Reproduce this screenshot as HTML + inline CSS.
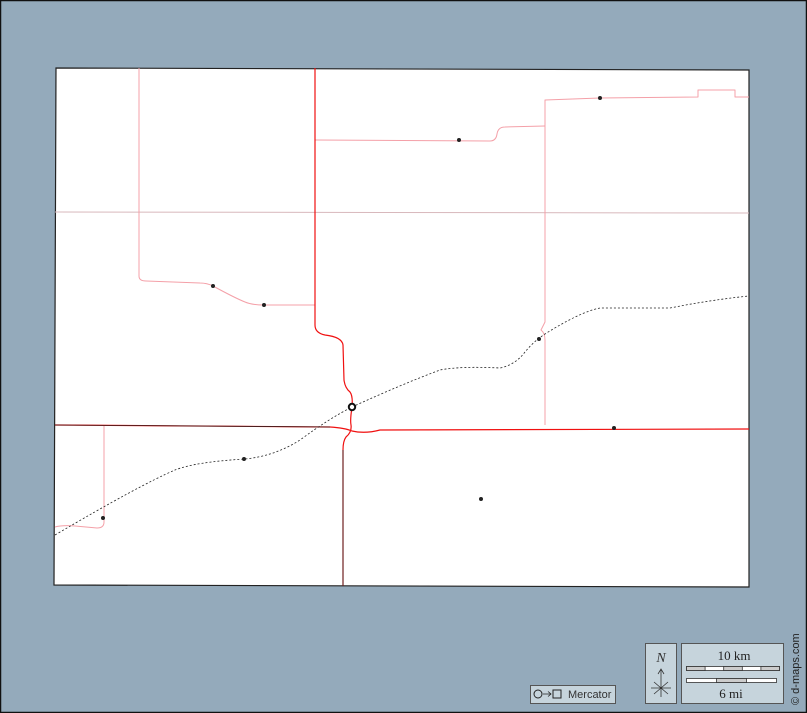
<!DOCTYPE html>
<html><head><style>
html,body{margin:0;padding:0;background:#94aabb;}
body{width:807px;height:713px;overflow:hidden;position:relative;}
svg{position:absolute;left:0;top:0;}
</style></head><body>
<svg width="807" height="713" viewBox="0 0 807 713" xmlns="http://www.w3.org/2000/svg">
<rect x="0.5" y="0.5" width="806" height="712" fill="#94aabb" stroke="#111" stroke-width="1.5"/>
<polygon points="56,68 749,70 749,587 54,585" fill="#fff" stroke="#222" stroke-width="1.2"/>
<g fill="none" stroke-linejoin="round">
<path d="M55,212 L749,213" stroke="#d8b8bc" stroke-width="1"/>
<path d="M139,68 L139,276 Q139,281 146,281 L200,283 Q207,283 213,286 Q235,298 245,302 Q252,305 264,305 L315,305" stroke="#f4a0a8" stroke-width="1"/>
<path d="M315,140 L490,141 Q496,141 497,134 Q498,127 505,127 L545,126" stroke="#f4a0a8" stroke-width="1"/>
<path d="M545,425 L545,340 Q545,333 541,330 L545,322 L545,100 L600,98 L698,97 L698,90 L735,90 L735,97 L749,97" stroke="#f4a0a8" stroke-width="1"/>
<path d="M104,425 L104,522 Q104,528 97,528 L75,526 Q62,525 55,527" stroke="#f4a0a8" stroke-width="1"/>
<path d="M315,68 L315,325 Q315,333 325,335 Q342,337 343,345 L344,380 Q345,388 350,392 Q353,396 352,407 Q350,420 351,425 Q352,432 346,437 Q343,441 343,450 L343,586" stroke="#f01010" stroke-width="1.2"/>
<path d="M343,450 L343,586" stroke="#552222" stroke-width="1"/>
<path d="M55,425 L330,427 Q345,428 352,431 Q365,434 380,430 L749,429" stroke="#f01010" stroke-width="1.2"/>
<path d="M55,425 L330,427" stroke="#332222" stroke-width="0.8"/>
<path d="M55,535 Q140,485 175,470 Q195,462 245,459 Q275,456 300,440 Q330,418 352,407 Q400,385 440,370 Q460,366 500,368 Q515,365 525,352 Q533,342 545,334 Q580,312 600,308 L670,308 Q710,300 749,296" stroke="#222" stroke-width="0.8" stroke-dasharray="2,2"/>
</g>
<g fill="#222">
<circle cx="213" cy="286" r="2"/><circle cx="264" cy="305" r="2"/><circle cx="459" cy="140" r="2"/>
<circle cx="600" cy="98" r="2"/><circle cx="539" cy="339" r="2"/><circle cx="244" cy="459" r="2"/>
<circle cx="103" cy="518" r="2"/><circle cx="614" cy="428" r="2"/><circle cx="481" cy="499" r="2"/>
</g>
<circle cx="352" cy="407" r="3.2" fill="#fff" stroke="#111" stroke-width="2"/>
<rect x="530.5" y="685.5" width="85" height="18" fill="#c6d4dc" stroke="#555"/>
<circle cx="538" cy="694" r="4" fill="none" stroke="#222"/>
<path d="M543,694 L551,694 M548,691.5 L551,694 L548,696.5" stroke="#222" stroke-width="0.8" fill="none"/>
<rect x="553" y="690" width="8" height="8" fill="none" stroke="#222"/>
<text x="568" y="698" font-family="Liberation Sans,sans-serif" font-size="11" fill="#333">Mercator</text>
<rect x="645.5" y="643.5" width="31" height="60" fill="#c6d4dc" stroke="#555"/>
<text x="661" y="662" text-anchor="middle" font-family="Liberation Serif,serif" font-style="italic" font-size="14" fill="#333">N</text>
<path d="M661,697 L661,670 M658,674 L661,669 L664,674 M651,688 L671,688 M654,682 L668,694 M668,682 L654,694" stroke="#333" stroke-width="0.8" fill="none"/>
<rect x="681.5" y="643.5" width="102" height="60" fill="#c6d4dc" stroke="#555"/>
<text x="734" y="660" text-anchor="middle" font-family="Liberation Serif,serif" font-size="13" fill="#222">10 km</text>
<rect x="686.5" y="666.5" width="93" height="4" fill="#fff" stroke="#333" stroke-width="0.8"/>
<rect x="686.5" y="666.5" width="18.6" height="4" fill="#ccc" stroke="#333" stroke-width="0.8"/>
<rect x="723.7" y="666.5" width="18.6" height="4" fill="#ccc" stroke="#333" stroke-width="0.8"/>
<rect x="760.9" y="666.5" width="18.6" height="4" fill="#ccc" stroke="#333" stroke-width="0.8"/>
<rect x="686.5" y="678.5" width="90" height="4" fill="#fff" stroke="#333" stroke-width="0.8"/>
<rect x="716.5" y="678.5" width="30" height="4" fill="#ccc" stroke="#333" stroke-width="0.8"/>
<text x="731" y="698" text-anchor="middle" font-family="Liberation Serif,serif" font-size="13" fill="#222">6 mi</text>
<text transform="translate(799,705) rotate(-90)" font-family="Liberation Sans,sans-serif" font-size="11" fill="#222">© d-maps.com</text>
</svg>
</body></html>
